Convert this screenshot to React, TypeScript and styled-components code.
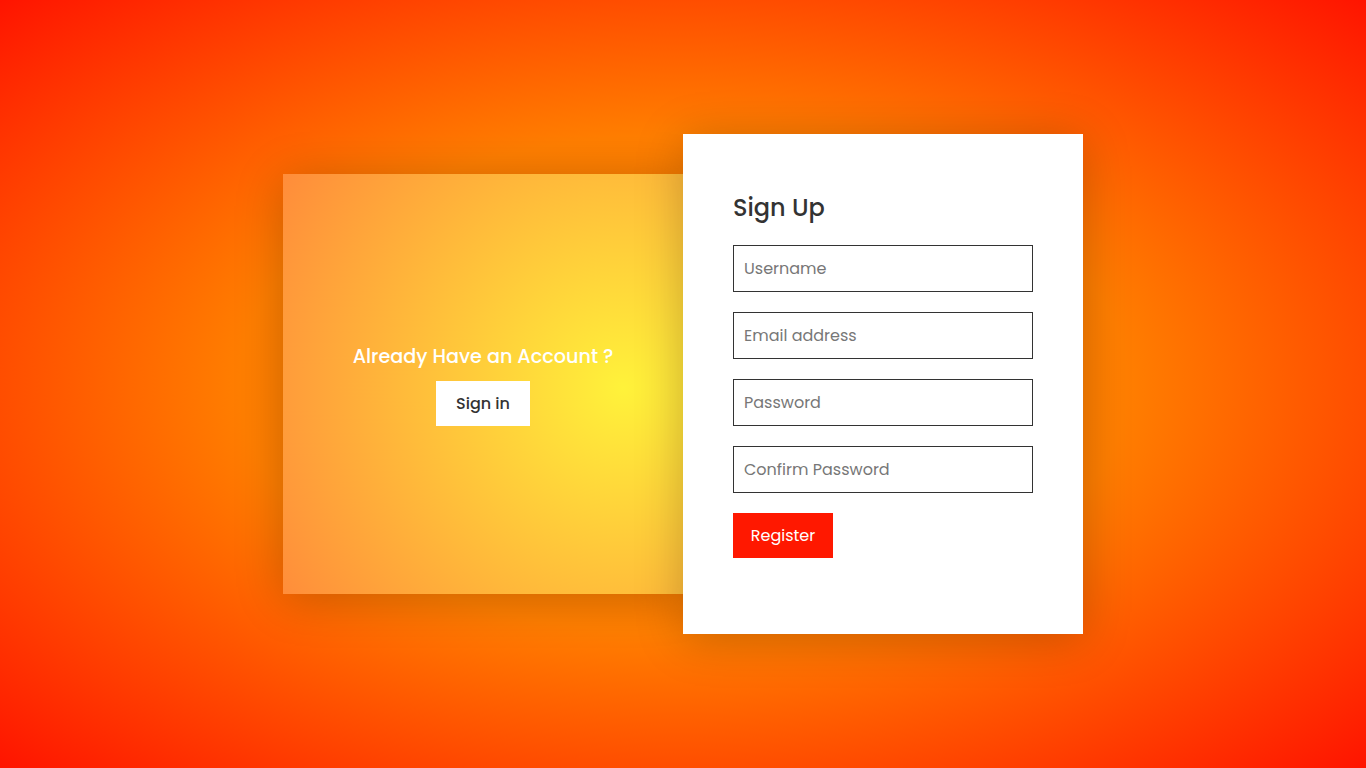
import React from "react";
import styled, { createGlobalStyle } from "styled-components";

const GlobalStyle = createGlobalStyle`
  * { box-sizing: border-box; }
  html, body { margin: 0; padding: 0; }
  body {
    font-family: Poppins, Inter, "Noto Sans", sans-serif;
  }
`;

const Page = styled.main`
  width: 100%;
  min-height: 100vh;
  display: flex;
  align-items: center;
  justify-content: center;
  background: radial-gradient(
    ellipse at 50% 50%,
    #ff8a00 0%,
    #ff7e00 46%,
    #ff1400 100%
  );
`;

const Container = styled.div`
  width: 800px;
  height: 500px;
  display: flex;
  align-items: center;
`;

const SidePanel = styled.section`
  width: 400px;
  height: 420px;
  display: flex;
  flex-direction: column;
  align-items: center;
  justify-content: center;
  background: radial-gradient(circle at 85% 51%, #fff23a 0%, #ff8c3a 100%);
  box-shadow: 0 5px 45px rgba(0, 0, 0, 0.22);
`;

const SideTitle = styled.h2`
  margin: 0 0 11px;
  font-size: 19.2px;
  line-height: 27px;
  font-weight: 500;
  color: #fff;
`;

const Button = styled.button<{ $variant: "light" | "red" }>`
  height: 45px;
  width: ${(p) => (p.$variant === "light" ? "94px" : "100px")};
  padding: 0;
  border: none;
  outline: none;
  cursor: pointer;
  font-family: inherit;
  font-size: 16px;
  font-weight: ${(p) => (p.$variant === "light" ? 500 : 400)};
  background: ${(p) => (p.$variant === "light" ? "#ffffff" : "#ff1800")};
  color: ${(p) => (p.$variant === "light" ? "#333333" : "#ffffff")};
`;

const FormCard = styled.section`
  width: 400px;
  height: 500px;
  padding: 56px 50px 50px;
  background: #fff;
  box-shadow: 0 5px 45px rgba(0, 0, 0, 0.22);
`;

const FormTitle = styled.h2`
  margin: 0 0 19px;
  font-size: 24px;
  line-height: 36px;
  font-weight: 500;
  color: #333;
`;

const Form = styled.form`
  display: flex;
  flex-direction: column;
  align-items: flex-start;
  gap: 20px;
`;

const Field = styled.input`
  width: 300px;
  height: 47px;
  padding: 0 10px;
  border: 1px solid #333;
  outline: none;
  font-family: inherit;
  font-size: 16px;
  color: #333;
  background: #fff;
  &::placeholder {
    color: #777;
  }
`;

export default function App() {
  return (
    <>
      <GlobalStyle />
      <Page>
        <Container>
          <SidePanel>
            <SideTitle>Already Have an Account ?</SideTitle>
            <Button type="button" $variant="light">
              Sign in
            </Button>
          </SidePanel>
          <FormCard>
            <FormTitle>Sign Up</FormTitle>
            <Form onSubmit={(e) => e.preventDefault()}>
              <Field type="text" placeholder="Username" />
              <Field type="email" placeholder="Email address" />
              <Field type="password" placeholder="Password" />
              <Field type="password" placeholder="Confirm Password" />
              <Button type="submit" $variant="red">
                Register
              </Button>
            </Form>
          </FormCard>
        </Container>
      </Page>
    </>
  );
}
